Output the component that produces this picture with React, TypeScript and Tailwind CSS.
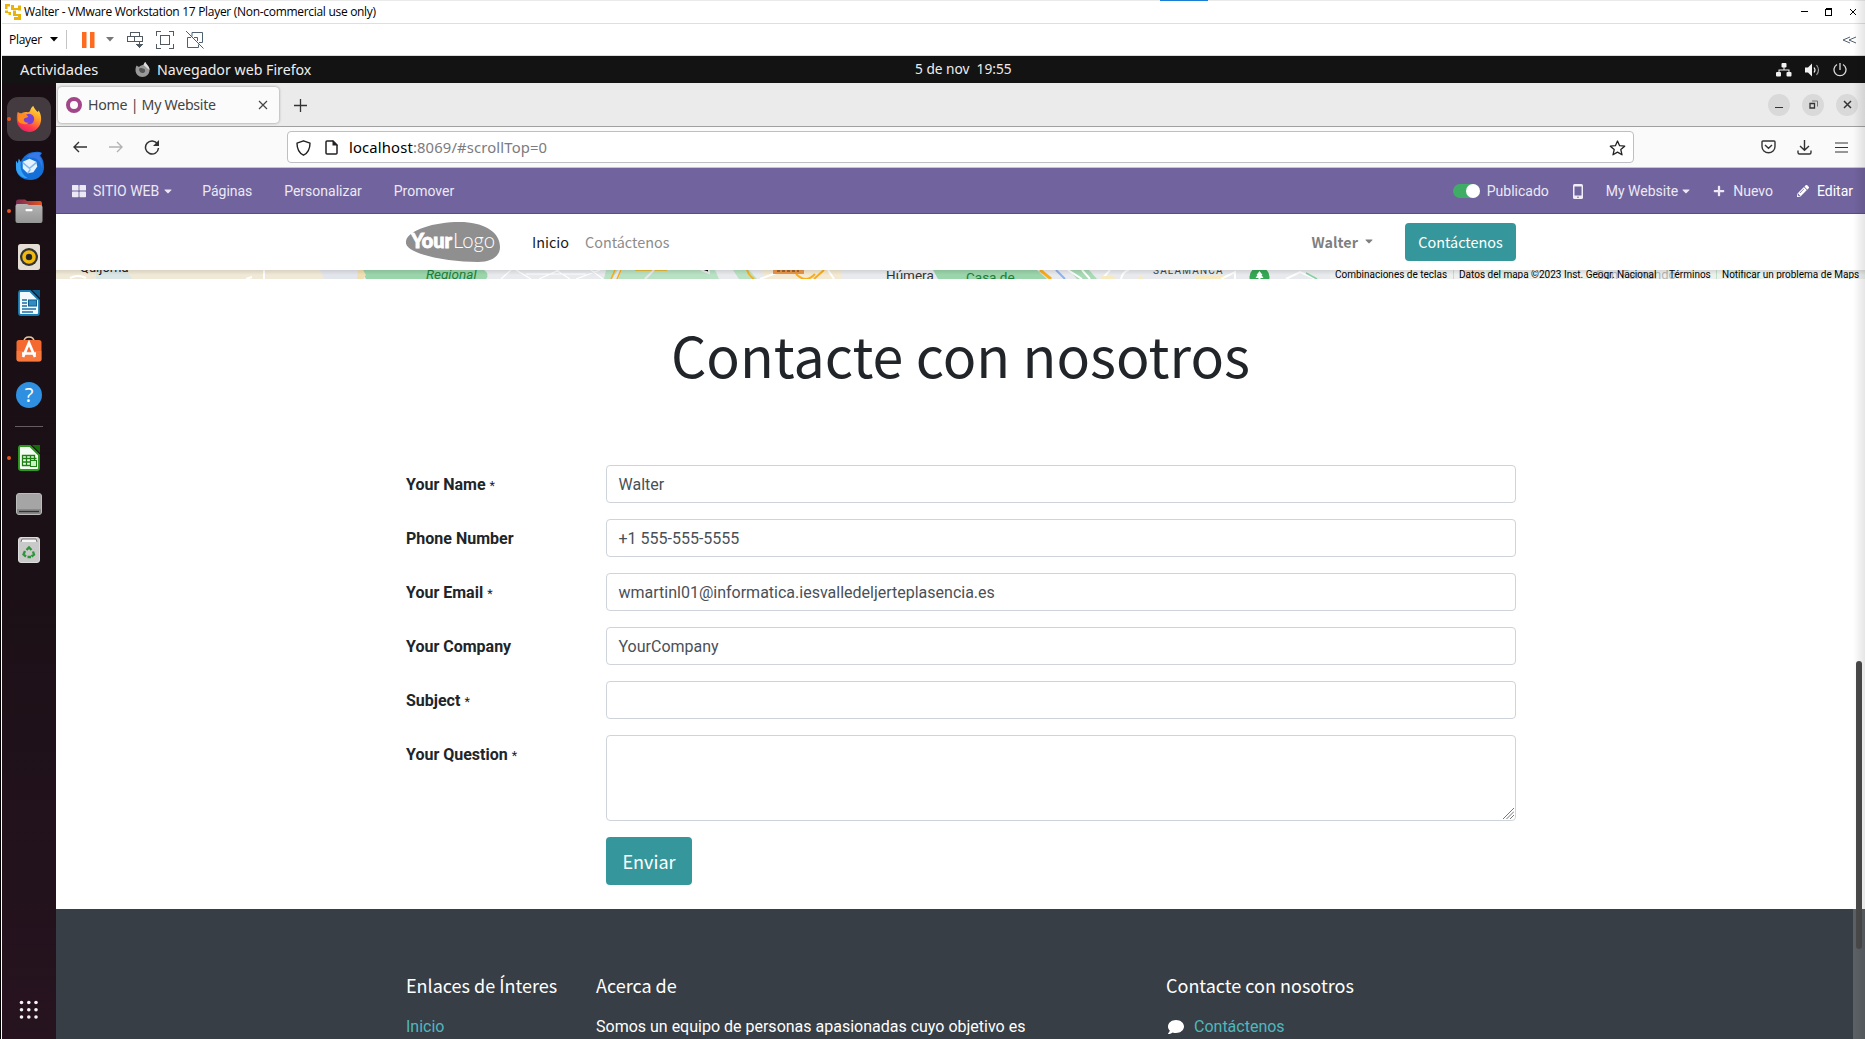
import React from "react";
import { FaThLarge, FaPlus, FaPencilAlt, FaComment, FaCaretDown } from "react-icons/fa";

function Title() {
  return (
    <div className="flex h-6 items-center border-b border-t border-b-[#dfdfdf] border-t-[#eaeaea] bg-white pl-[3px] pr-[8px] font-['Open_Sans','Noto_Sans',sans-serif] text-[12px] text-black">
      <svg width="16" height="16" viewBox="0 0 16 16" fill="#e9b208">
        <path d="M0 0h5v2.500H2.500V5H0zM6 1h3v3h4V1.500h3v5h-3V6H6zM0 6.500h3V8h3v3H3.500V9H0zM8 6.500h3V10h5v6H9v-3h4v-1H8z" />
      </svg>
      <span className="ml-[3px] whitespace-nowrap tracking-[-0.3px]">Walter - VMware Workstation 17 Player (Non-commercial use only)</span>
      <svg className="ml-auto" width="56" height="12" viewBox="0 0 56 12" fill="none" stroke="#000" shapeRendering="crispEdges">
        <path d="M0 5.500h7M24.500 3.500h6v6h-6zM24.500 2.500h6" />
        <path d="M49 3l6 6M55 3l-6 6" shapeRendering="auto" />
      </svg>
    </div>
  );
}

function PlayerBar() {
  return (
    <div className="flex h-8 items-center border-b border-[#dcdcdc] bg-white pl-[7px] pr-[8px] font-['Open_Sans','Noto_Sans',sans-serif] text-[12px] text-black">
      <span className="w-[33px] tracking-[-0.300px]">Player</span>
      <svg className="ml-[8px]" width="8" height="5" viewBox="0 0 8 5"><path d="M0 0h8L4 4.500z" fill="#000" /></svg>
      <div className="ml-[8px] h-[19px] w-px bg-[#c4c4c4]" />
      <svg className="ml-[15px]" width="13" height="16" viewBox="0 0 13 16" fill="#ff6a1f"><path d="M0 0h4.500v16H0zM8 0h4.500v16H8z" /></svg>
      <svg className="ml-[11px]" width="8" height="5" viewBox="0 0 8 5"><path d="M0 0h8L4 4.500z" fill="#777" /></svg>
      <svg className="ml-[13px]" width="18" height="18" viewBox="0 0 18 18" fill="none" stroke="#505a60" shapeRendering="crispEdges">
        <path d="M3.500 1.500h9v4h-9zM.5 5.500h7v5h-7zM7.500 5.500h8v5h-8zM12.500 10v5" />
        <path d="M9 13h7l-3.500 4z" fill="#505a60" stroke="none" />
      </svg>
      <svg className="ml-[11px]" width="18" height="18" viewBox="0 0 18 18" fill="none" stroke="#505a60" shapeRendering="crispEdges">
        <path d="M5 .5H.5V5M13 .5h4.500V5M.5 13v4.500H5M17.500 13v4.500H13M4.500 4.500h9v9h-9z" />
      </svg>
      <svg className="ml-[12px]" width="18" height="18" viewBox="0 0 18 18" fill="none" stroke="#4f6070">
        <path d="M6 5.500V1.500h10.500v10H13M1.500 6.500v10h11v-3M1.500 6.500H5M8 6.500h3.500V10M0 0l17.500 17.500" />
      </svg>
      <svg className="ml-auto" width="15" height="8" viewBox="0 0 15 8" fill="none" stroke="#506070"><path d="M8 1L1 4l7 3M14 1L7 4l7 3" /></svg>
    </div>
  );
}

function GnomeBar() {
  return (
    <div className="flex h-[27px] items-center bg-[#131313] pl-[18px] pr-[18px] font-['Noto_Sans',sans-serif] text-[14px] text-[#eee]">
      <div className="flex w-[895px] items-center">
        <span className="w-[79px] text-[14.700px]">Actividades</span>
        <svg className="ml-[36px]" width="15" height="15" viewBox="0 0 30 30">
          <path d="M3 7l5 3c3-3 6-4 9-4 1-3 2-5 4-6 0 4 8 8 8 16 0 8-6 14-14 14S1 24 1 16c0-4 1-6 2-9z" fill="#999" />
          <path d="M8 14c2-3 6-2 8-1 5 0 6 7 1 9-5 1-9-3-9-8z" fill="#555" />
          <path d="M17 6c1-3 2-5 4-6 0 4 8 8 8 16l-5-4z" fill="#ddd" />
        </svg>
        <span className="ml-[7px] whitespace-nowrap text-[14.200px]">Navegador web Firefox</span>
      </div>
      <span className="whitespace-pre text-[13.700px]">5 de nov  19:55</span>
      <div className="ml-auto flex items-center justify-end gap-[13px]">
        <svg width="16" height="14" viewBox="0 0 16 14" fill="#f2f2f2"><rect x="5.500" y="0" width="5" height="4.500" rx="1" /><rect x="0" y="9" width="5" height="4.500" rx="1" /><rect x="10.500" y="9" width="5" height="4.500" rx="1" /><path d="M7.500 4h1v2.500h5V9h-1V7.500h-9V9h-1V6.500h5z" /></svg>
        <svg width="15" height="14" viewBox="0 0 15 14" fill="none" stroke="#f2f2f2" strokeWidth="1.200"><path d="M0 4.500h3L7 .5v13l-4-4H0z" fill="#f2f2f2" stroke="none" /><path d="M9 4.500q2 2.500 0 5" /><path d="M11.500 2q4 5 0 10" stroke="#999" /></svg>
        <svg width="14" height="14" viewBox="0 0 14 14" fill="none" stroke="#ddd" strokeWidth="1.300"><path d="M4 1.500a6 6 0 1 0 6 0M7 0v7" /></svg>
      </div>
    </div>
  );
}

function DockItem({ on, active, children }: { on?: boolean; active?: boolean; children: React.ReactNode }) {
  return (
    <div className="flex h-[46px] w-full items-center pl-[5px]">
      <div className={active ? "flex h-[44px] w-[44px] items-center rounded-[11px] bg-[#443b41]" : "flex h-[44px] w-[44px] items-center"}>
        <span className={on ? "h-[4px] w-[4px] rounded-full bg-[#e95420]" : "h-[4px] w-[4px]"} />
        <div className="flex flex-1 justify-center pr-[4px]">{children}</div>
      </div>
    </div>
  );
}

function Dock() {
  return (
    <aside className="flex w-[54px] flex-col items-start bg-gradient-to-b from-[#190e14] via-[#1b1016] to-[#26131f] pt-[13px]">
      <DockItem on active>
        <svg width="26" height="26" viewBox="0 0 30 30">
          <defs>
            <linearGradient id="fx" x1="0.800" y1="0" x2="0.300" y2="1"><stop offset="0" stopColor="#ffe040" /><stop offset=".4" stopColor="#ff9a28" /><stop offset=".75" stopColor="#ff3b4b" /><stop offset="1" stopColor="#e8206c" /></linearGradient>
          </defs>
          <path d="M2 7l4 2c1-1 3-2 5-2 2 0 3 1 5-1 1-3 2-5 4-6 1 3 3 5 5 7 1-1 1-1 1-2 2 3 3 6 3 10 0 8-6 15-14 15S1 23 1 16c0-4 0-6 1-9z" fill="url(#fx)" />
          <circle cx="15" cy="15" r="6" fill="#7542d8" />
          <path d="M3 9c4-1 9 0 11 3-1 2-4 1-5 3-1 3 3 5 6 4-4 4-12 2-13-3z" fill="#ff8a20" />
        </svg>
      </DockItem>
      <DockItem>
        <svg width="29" height="29" viewBox="0 0 30 30">
          <path d="M1 10l2 3 1-5 2 3C9 5 14 1 20 1q5-1 8 1l-2 3c3 3 4 7 4 12 0 7-6 13-14 13S1 25 1 17z" fill="#1370d8" />
          <path d="M12 6c4-4 9-5 15-4l-2 3c3 4 4 8 3 13-1-6-4-10-9-11-3 0-5 0-7-1z" fill="#3a78e8" />
          <path d="M1 10l2 3 1-5 2 4c-1 8 2 13 7 16C6 28 1 23 1 16z" fill="#35a2f4" />
          <path d="M8 11l7-3 7 3 1 5-4 6-6 1-5-5z" fill="#e6f2fd" /><path d="M8 12l7 6 7-6M13 23l3-4" fill="none" stroke="#7db9ee" strokeWidth="1.500" />
        </svg>
      </DockItem>
      <DockItem on>
        <svg width="28" height="26" viewBox="0 0 28 26">
          <defs><linearGradient id="fo" x1="0" x2="1"><stop offset="0" stopColor="#772953" /><stop offset="1" stopColor="#e95420" /></linearGradient><linearGradient id="fg" x1="0" y1="0" x2="0" y2="1"><stop offset="0" stopColor="#b5b5b5" /><stop offset="1" stopColor="#969696" /></linearGradient></defs>
          <path d="M1 4q0-2.500 2.500-2.500H10l2 1.500h13q2 0 2 3v8H1z" fill="url(#fo)" />
          <path d="M.5 8q0-2 2-2H12l2 1h11q2.500 0 2.500 2v14q0 2-2 2h-23q-2 0-2-2z" fill="url(#fg)" />
          <rect x="10.500" y="11" width="7" height="2.200" rx=".8" fill="#fff" />
        </svg>
      </DockItem>
      <DockItem>
        <svg width="22" height="26" viewBox="0 0 22 26"><rect width="22" height="26" rx="2.500" fill="#e4ded5" /><circle cx="11" cy="13" r="9" fill="#333" /><circle cx="11" cy="13" r="5" fill="none" stroke="#f2b90c" strokeWidth="3.500" /><circle cx="11" cy="13" r="2.500" fill="#222" /></svg>
      </DockItem>
      <DockItem>
        <svg width="22" height="26" viewBox="0 0 22 26"><path d="M2.500 1H12l9 9v13q0 2-2 2H3q-2 0-2-2V3q0-2 1.500-2z" fill="#f3f9fd" stroke="#1b7fb5" strokeWidth="1.800" /><path d="M14 0h8v8z" fill="#0f5d8a" /><path d="M4 10h5M4 13h5M4 16h5M4 19h14M4 22h11" stroke="#1b6fa5" strokeWidth="1.300" /><rect x="10.500" y="10" width="8" height="6" fill="#2f8dc4" stroke="#125d8a" /></svg>
      </DockItem>
      <DockItem>
        <svg width="26" height="26" viewBox="0 0 26 26"><path d="M8 6q0-5 5-5t5 5" fill="none" stroke="#e6c8a0" strokeWidth="1.600" /><rect x=".5" y="4" width="25" height="21.500" rx="2.500" fill="#f4692f" /><path d="M.5 15h25v8q0 2.500-2.500 2.500H3Q.5 25.500.5 23z" fill="#fa8448" opacity=".6" /><path d="M7 21l6-14 6 14M6 17.500h14" fill="none" stroke="#fff" strokeWidth="2.700" /></svg>
      </DockItem>
      <DockItem>
        <span className="flex h-[26px] w-[26px] items-center justify-center rounded-full bg-[#2f8fe0] font-['Noto_Sans',sans-serif] text-[20px] leading-none text-white">?</span>
      </DockItem>
      <div className="mb-[8px] ml-[13px] mt-[8px] h-px w-[28px] bg-[#655d61]" />
      <DockItem on>
        <svg width="22" height="26" viewBox="0 0 22 26"><path d="M2.500 1H12l9 9v13q0 2-2 2H3q-2 0-2-2V3q0-2 1.500-2z" fill="#f3fdf3" stroke="#2c9a1f" strokeWidth="1.900" /><path d="M14 0h8v8z" fill="#146b0c" /><path d="M4.500 10.500h12v10h-12zM4.500 13.500h14M4.500 17h14M8.500 10v11M12.500 10v11" fill="none" stroke="#1d7f14" strokeWidth="1.300" /><rect x="12.500" y="15.500" width="6" height="6" fill="#c9efc3" stroke="#1d7f14" /></svg>
      </DockItem>
      <DockItem>
        <svg width="26" height="22" viewBox="0 0 26 22"><rect x=".5" y=".5" width="25" height="21" rx="2.500" fill="#a5a5a5" stroke="#bcbcbc" /><path d="M1 16h24v3q0 2-2 2H3q-2 0-2-2z" fill="#888" /><path d="M3 18.500h20" stroke="#333" strokeWidth="1.300" /></svg>
      </DockItem>
      <DockItem>
        <svg width="22" height="26" viewBox="0 0 22 26"><rect x=".5" y=".5" width="21" height="25" rx="2.500" fill="#c9c9c9" stroke="#ddd" /><path d="M3 5l1-3h14l1 3" fill="#f5f5f5" stroke="#777" /><path d="M8.500 13l2.500-2.500 2.500 2.500M15 14.500l1 3-2.500 2M8 19.500l-2.500-2 1.500-3.500M9.500 20h3.500" fill="none" stroke="#2f9439" strokeWidth="2.300" /></svg>
      </DockItem>
      <svg className="mb-[19px] ml-[17px] mt-auto" width="20" height="20" viewBox="0 0 20 20" fill="#f4f4f4">
        {[2.5, 9.8, 17].map((y) => [2.5, 9.8, 17].map((x) => <circle key={x + "-" + y} cx={x} cy={y} r="1.800" />))}
      </svg>
    </aside>
  );
}

function TabStrip() {
  return (
    <div className="flex h-[44px] items-center border-b border-[#a0a0a0] bg-[#ebebeb] pl-[2px] pr-[7px] font-['Noto_Sans',sans-serif] text-[14.200px] text-[#444]">
      <div className="flex h-[36px] w-[221px] items-center rounded-[4px] bg-[#fbfbfb] pl-[8px] pr-[11px] shadow-[0_0_3px_rgba(0,0,0,0.400)]">
        <span className="h-[16px] w-[16px] rounded-full border-[4px] border-[#a24689]" />
        <span className="ml-[6px] tracking-[-0.280px]">Home | My Website</span>
        <svg className="ml-auto" width="10" height="10" viewBox="0 0 10 10" stroke="#444" strokeWidth="1.200"><path d="M1 1l8 8M9 1l-8 8" /></svg>
      </div>
      <svg className="ml-[15px] mt-[2px]" width="13" height="13" viewBox="0 0 13 13" stroke="#333" strokeWidth="1.300"><path d="M6.500 0v13M0 6.500h13" /></svg>
      <div className="ml-auto flex gap-[12px]">
        <span className="flex h-[22px] w-[22px] items-center justify-center rounded-full bg-[#d9d9d9]"><svg width="10" height="10" stroke="#333"><path d="M1 7.500h8" /></svg></span>
        <span className="flex h-[22px] w-[22px] items-center justify-center rounded-full bg-[#d9d9d9]"><svg width="9" height="9" fill="none" stroke="#333"><path d="M1 3.500h4.500v4.500h-4.500z" strokeWidth="1.300" /><path d="M3 1h5.500v5.500" stroke="#777" /></svg></span>
        <span className="flex h-[22px] w-[22px] items-center justify-center rounded-full bg-[#d9d9d9]"><svg width="9" height="9" stroke="#333" strokeWidth="1.500"><path d="M1 1l7 7M8 1l-7 7" /></svg></span>
      </div>
    </div>
  );
}

function UrlBar() {
  return (
    <div className="flex h-[41px] items-center border-b border-[#c6c6ca] bg-[#fafafa] pl-[17px] pr-[17px]">
      <svg width="14" height="12" viewBox="0 0 14 12" fill="none" stroke="#333" strokeWidth="1.400"><path d="M14 6H1M6 1L1 6l5 5" /></svg>
      <svg className="ml-[22px]" width="14" height="12" viewBox="0 0 14 12" fill="none" stroke="#b3b3b3" strokeWidth="1.400"><path d="M0 6h13M8 1l5 5-5 5" /></svg>
      <svg className="ml-[21px]" width="16" height="16" viewBox="0 0 16 16" fill="none" stroke="#333" strokeWidth="1.500"><path d="M13.500 5A6.500 6.500 0 1 0 14.500 9" /><path d="M15 1v6H9z" fill="#333" stroke="none" /></svg>
      <div className="ml-[127px] flex h-[32px] w-[1347px] items-center rounded-[4px] border border-[#bfbfc3] bg-white pl-[8px] pr-[7px] pt-px font-['Noto_Sans',sans-serif] text-[14.800px]">
        <svg width="15" height="16" viewBox="0 0 15 16" fill="none" stroke="#222" strokeWidth="1.400"><path d="M7.500 .8l6.500 2.400c0 6-1.500 9.500-6.500 12C2.500 12.700 1 9.200 1 3.200z" strokeLinejoin="round" /></svg>
        <svg className="ml-[14px]" width="13" height="15" viewBox="0 0 13 15" fill="none" stroke="#222" strokeWidth="1.500"><path d="M1 2q0-1 1-1h6l4 4v8q0 1-1 1H2q-1 0-1-1z" /><path d="M7.500 0v5.500H13z" fill="#222" stroke="none" /></svg>
        <span className="ml-[11px] tracking-[0.150px] text-black">localhost</span><span className="tracking-[0.150px] text-[#7b7b80]">:8069/#scrollTop=0</span>
        <svg className="ml-auto" width="17" height="16" viewBox="0 0 17 16" fill="none" stroke="#222" strokeWidth="1.300" strokeLinejoin="round"><path d="M8.500 1l2.100 4.700 5.100.5-3.900 3.400 1.200 5.200-4.500-2.700-4.500 2.700 1.200-5.200L1.300 6.200l5.100-.5z" /></svg>
      </div>
      <svg className="ml-auto" width="15" height="14" viewBox="0 0 15 14" fill="none" stroke="#333" strokeWidth="1.400"><path d="M2 1h11q1 0 1 1v4.500a6.500 6.200 0 0 1-13 0V2q0-1 1-1zM4 5l3.500 3.300L11 5" /></svg>
      <svg className="ml-[21px]" width="15" height="15" viewBox="0 0 15 15" fill="none" stroke="#333" strokeWidth="1.400"><path d="M7.500 0v10M3 6l4.500 4.300L12 6M1 10.500v2q0 1.500 1.500 1.500h10q1.500 0 1.500-1.500v-2" /></svg>
      <svg className="ml-[23px]" width="13" height="11" viewBox="0 0 13 11" stroke="#333" strokeWidth="1.200"><path d="M0 1h13M0 5.500h13M0 10h13" /></svg>
    </div>
  );
}

function OdooBar() {
  return (
    <div className="flex h-[46px] items-center border-b border-[#5c4f80] bg-[#71639e] pl-[16px] pr-[12px] pt-[1px] font-['Roboto',sans-serif] text-[14px] text-[#ece9f5]">
      <FaThLarge size={14} />
      <span className="ml-[7px]">SITIO WEB</span>
      <FaCaretDown className="ml-[3px]" size={12} />
      <span className="ml-[28px] tracking-[-0.050px]">Páginas</span>
      <span className="ml-[32px]">Personalizar</span>
      <span className="ml-[32px]">Promover</span>
      <div className="ml-auto flex items-center">
        <span className="flex h-[14px] w-[27px] items-center justify-end rounded-full bg-[#40ad67]"><span className="h-[14px] w-[14px] rounded-full bg-white" /></span>
        <span className="ml-[7px]">Publicado</span>
        <svg className="ml-[24px]" width="10" height="15" viewBox="0 0 10 15"><rect width="10" height="15" rx="1.500" fill="#f0edf7" /><path d="M1.500 2.500h7v9h-7z" fill="#71639e" /><circle cx="5" cy="13.200" r=".8" fill="#71639e" /></svg>
        <span className="ml-[23px]">My Website</span>
        <FaCaretDown className="ml-[2px]" size={12} />
        <FaPlus className="ml-[21px]" size={12} />
        <span className="ml-[8px]">Nuevo</span>
        <FaPencilAlt className="ml-[24px] text-white" size={12} />
        <span className="ml-[8px] text-white">Editar</span>
      </div>
    </div>
  );
}

function SiteNav() {
  return (
    <div className="flex h-[56px] items-center bg-white pl-[350px] pr-[349px] font-['Noto_Sans_CJK_SC',sans-serif] text-[14.400px]">
      <svg width="94" height="40" viewBox="0 0 94 40">
        <path d="M0 19C2 8 28 0 54 0c22 0 40 9 40 25 0 9-8 15-22 15C42 40-3 32 0 19z" fill="#8f8f8f" />
        <path d="M4 11.500h4" stroke="#fff" />
        <text x="5" y="26" fill="#fff" stroke="#fff" strokeWidth="0.900" fontFamily="Lato" fontWeight="900" fontSize="20" textLength="41" lengthAdjust="spacingAndGlyphs">Your</text>
        <text x="47" y="26" fill="#fff" fontFamily="Lato" fontWeight="300" fontSize="22" textLength="42" lengthAdjust="spacingAndGlyphs">Logo</text>
      </svg>
      <span className="ml-[32px] text-[#1a1a1a]">Inicio</span>
      <span className="ml-[16px] text-[#8c8c8c]">Contáctenos</span>
      <span className="ml-auto font-bold text-[#7f7f7f]">Walter</span>
      <FaCaretDown className="mb-[3px] ml-[5px] text-[#7f7f7f]" size={12} />
      <span className="ml-[30px] flex h-[38px] w-[111px] items-center justify-center rounded-[4px] bg-[#35979c] text-white">Contáctenos</span>
    </div>
  );
}

function MapStrip() {
  return (
    <div className="relative h-[9px] overflow-hidden bg-[#e8eaed] font-['Roboto',sans-serif]">
      <svg className="block" width="1809" height="9" viewBox="0 0 1809 9">
        <rect width="270" height="9" fill="#f1e9d7" />
        <path d="M40 9V0h30l6 9z" fill="#dbe6e6" />
        <path d="M14 8q8-4 16 0M190 9l6-2M208 0v9" stroke="#fff" strokeWidth="2" fill="none" />
        <path d="M264 0h38v9h-34z" fill="#e3e5ec" />
        <path d="M306 0h122q6 4 2 9H310z" fill="#9bd5ab" /><path d="M302 0h5l3 5-3 4h-6z" fill="#f1dfb4" />
        <path d="M445 9l10-9M460 0l15 9M483 9l20-9M500 0l14 9M520 9l24-9M535 0l12 9M470 4h60" stroke="#fff" strokeWidth="1.200" />
        <path d="M550 0h12l-6 9h-8zM566 0h93l4 9h-101zM677 0h16l8 9h-18z" fill="#b9e2c4" />
        <path d="M559 0l-4 9M565 0l-4 9" stroke="#f9ad1c" strokeWidth="1.500" />
        <path d="M579 0h32" stroke="#e7bd3b" strokeWidth="2" /><path d="M598 0l-9 9M645 0l8 3v-3" stroke="#e8eaed" strokeWidth="2" />
        <path d="M705 0h80v9h-75z" fill="#f4ead3" />
        <path d="M691 0q2 6 7 9M740 4q10 10 19 0M768 0l-10 9" fill="none" stroke="#f9ad1c" strokeWidth="2" />
        <path d="M704 9l16-6M772 0l6 9" stroke="#fff" strokeWidth="2" />
        <rect x="717" width="31" height="4" fill="#e9964a" /><path d="M721 1h22" stroke="#5b3712" strokeDasharray="3 2" />
        <path d="M877 0h104l10 9H882z" fill="#9bd5ab" />
        <path d="M984 0l11 9" stroke="#f9ad1c" strokeWidth="3" /><path d="M1000 0l9 9" stroke="#8ab4f0" strokeWidth="2" />
        <path d="M1013 0h20l8 9h-20z" fill="#a8dab5" /><path d="M1012 0l14 9M1026 0l8 9M1046 9l8-9M1065 9q2-8 8-9" fill="none" stroke="#fff" strokeWidth="2" />
        <path d="M1045 6h12l4 4h-16zM1085 4l2 5h-5zM1140 6h30v3h-30z" fill="#f8eac0" />
        <path d="M1165 9l14-7v7M1230 9l14-7 16 7" fill="none" stroke="#fff" strokeWidth="2" />
        <circle cx="1203.500" cy="7" r="10" fill="#34a853" /><path d="M1203.500 1l3 4h-1l2 3h-3v1h-2V8h-3l2-3h-1z" fill="#fff" />
        <path d="M1250 3l11 6" stroke="#86cf9d" strokeWidth="1.500" />
        <rect x="1274" width="535" height="9" fill="#eef0ee" />
        <path d="M1397.500 0v9M1660.500 0v9" stroke="#bfe0c8" /><path d="M1408 0h20v9h-20z" fill="#f6dccb" />
        <path d="M1430 0h25l6 9h-30zM1670 0h30l6 9h-30z" fill="#dcefe0" />
      </svg>
      <span className="absolute left-[24px] top-[-10px] text-[13px] leading-[16px] text-[#222]">Quijorna</span>
      <span className="absolute left-[370px] top-[-4px] text-[13.500px] italic leading-[16px] text-[#188038]">Regional</span>
      <span className="absolute left-[830px] top-[-3px] text-[13.500px] leading-[16px] text-[#333]">Húmera</span>
      <span className="absolute left-[910px] top-[-1px] text-[13.500px] leading-[16px] text-[#188038]">Casa de</span>
      <span className="absolute left-[1097px] top-[-7px] text-[10px] leading-[16px] tracking-[1.200px] text-[#444]">SALAMANCA</span>
      <span className="absolute left-[1474px] top-[-3px] w-[146px] text-right text-[13px] leading-[16px] text-[#b5b5b5]">San Fernando</span>
      <div className="absolute left-[1279px] top-[-3px] flex whitespace-nowrap text-[10px] leading-[15px] text-black">
        <span className="w-[124px]">Combinaciones de teclas</span>
        <span className="w-[210px]">Datos del mapa ©2023 Inst. Geogr. Nacional</span>
        <span className="w-[53px]">Términos</span>
        <span>Notificar un problema de Maps</span>
      </div>
      <div className="absolute inset-x-0 top-0 h-[5px] bg-gradient-to-b from-black/10 to-transparent" />
    </div>
  );
}

const FIELDS = [
  { label: "Your Name", required: true, value: "Walter" },
  { label: "Phone Number", required: false, value: "+1 555-555-5555" },
  { label: "Your Email", required: true, value: "wmartinl01@informatica.iesvalledeljerteplasencia.es" },
  { label: "Your Company", required: false, value: "YourCompany" },
  { label: "Subject", required: true, value: "" },
];

function Label({ text, required }: { text: string; required: boolean }) {
  return (
    <div className="w-[200px] shrink-0 pt-[8px] leading-6">
      <span className="font-bold text-[#212529]">{text}</span>
      {required && <span className="ml-[4px] text-[12.500px] text-[#212529]">*</span>}
    </div>
  );
}

function ContactForm() {
  return (
    <section className="h-[630px] bg-white font-['Roboto',sans-serif] text-[16px]">
      <h1 className="pt-[33px] text-center font-['Noto_Sans_CJK_SC',sans-serif] text-[55.500px] leading-[84px] text-[#212529]">Contacte con nosotros</h1>
      <div className="ml-[350px] mt-[69px] w-[1110px]">
        {FIELDS.map((f) => (
          <div key={f.label} className="mb-4 flex h-[38px]">
            <Label text={f.label} required={f.required} />
            <div className="flex flex-1 items-center rounded-[4px] border border-[#ced4da] bg-white px-[11.500px] pt-[2px] text-[#495057]">{f.value}</div>
          </div>
        ))}
        <div className="mb-4 flex h-[86px]">
          <Label text="Your Question" required />
          <div className="flex flex-1 items-end justify-end rounded-[4px] border border-[#ced4da] p-px">
            <svg width="11" height="11" viewBox="0 0 11 11" stroke="#777"><path d="M0 11L11 0M3.500 11L11 3.500M7 11l4-4" /></svg>
          </div>
        </div>
        <div className="ml-[200px] flex h-[48px] w-[86px] items-center justify-center rounded-[4px] bg-[#35979c] font-['Noto_Sans_CJK_SC',sans-serif] text-[18px] text-white">Enviar</div>
      </div>
    </section>
  );
}

function Footer() {
  const head = "font-['Noto_Sans_CJK_SC',sans-serif] text-[18px] leading-[24px] whitespace-nowrap";
  return (
    <footer className="flex flex-1 bg-[#383e45] pl-[350px] pt-[64px] font-['Roboto',sans-serif] text-[16px] leading-6 text-white">
      <div className="w-[190px]">
        <h5 className={head}>Enlaces de Ínteres</h5>
        <p className="mt-[18px] text-[#4fb8bd]">Inicio</p>
      </div>
      <div className="w-[570px]">
        <h5 className={head}>Acerca de</h5>
        <p className="mt-[18px]">Somos un equipo de personas apasionadas cuyo objetivo es</p>
      </div>
      <div>
        <h5 className={head}>Contacte con nosotros</h5>
        <p className="mt-[18px] flex items-center text-[#4fb8bd]"><FaComment className="ml-[2px] mr-[10px] text-white" size={16} />Contáctenos</p>
      </div>
    </footer>
  );
}

export default function App() {
  return (
    <div className="relative flex h-[1039px] w-[1865px] flex-col overflow-hidden border-l border-black bg-white pl-px">
      <Title />
      <PlayerBar />
      <GnomeBar />
      <div className="flex min-h-0 flex-1">
        <Dock />
        <main className="relative flex min-w-0 flex-1 flex-col">
          <TabStrip />
          <UrlBar />
          <OdooBar />
          <SiteNav />
          <MapStrip />
          <ContactForm />
          <Footer />
          <div className="absolute bottom-0 right-0 h-[130px] w-[12px] bg-[#5c6166]" />
          <div className="absolute right-[3px] top-[578px] h-[288px] w-[6px] rounded-full bg-[#4a4a4a]" />
        </main>
      </div>
      <div className="absolute left-[1159px] top-0 h-px w-[48px] bg-[#1a7fd4]" />
      <div className="pointer-events-none absolute right-0 top-0 h-full w-[12px] bg-gradient-to-l from-black/10 to-transparent" />
    </div>
  );
}
